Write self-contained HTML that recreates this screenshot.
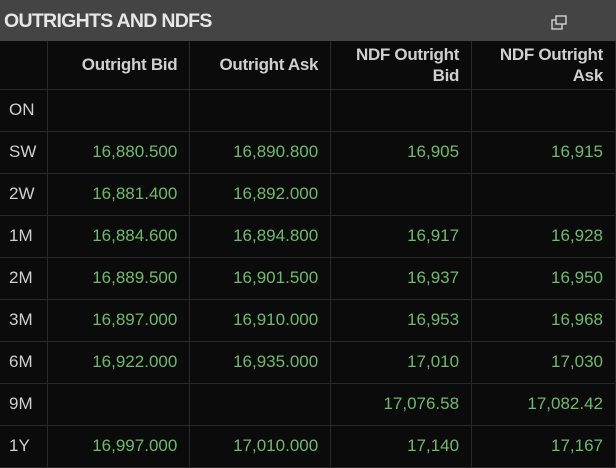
<!DOCTYPE html>
<html><head><style>
body{margin:0;width:616px;height:462px;background:#0b0b0b;overflow:hidden;font-family:"Liberation Sans",sans-serif;}
.top{position:absolute;left:0;top:0;width:616px;height:41px;background:#444;}
.top .t{position:absolute;left:4px;top:10px;color:#e6e6e6;font-weight:bold;font-size:19.5px;letter-spacing:-0.7px;}
.top svg{position:absolute;left:551px;top:15px;}
table{position:absolute;top:41px;left:0;border-collapse:collapse;table-layout:fixed;}
td{border:1px solid #2a2a2a;height:42px;box-sizing:border-box;padding:0 12px 0 0;text-align:right;font-size:17px;color:#6dbb6a;white-space:nowrap;}
tr.h td{height:48px;color:#cfcfcf;font-weight:bold;font-size:17px;line-height:21px;letter-spacing:-0.3px;}
td.l{text-align:left;padding:0 0 0 9px;color:#cfcfcf;}
tr td:first-child{border-left:none;}
tr.h td{border-top:none;}
</style></head><body>
<div class="top"><div class="t">OUTRIGHTS AND NDFS</div>
<svg width="17" height="15" viewBox="0 0 17 15" fill="none" stroke="#ddd" stroke-width="1.3"><rect x="5" y="1" width="10" height="8"/><path d="M5 5H1v9h10v-5"/></svg></div>
<table>
<colgroup><col style="width:48px"><col style="width:142px"><col style="width:141px"><col style="width:141px"><col style="width:144px"></colgroup>
<tr class="h"><td></td><td>Outright Bid</td><td>Outright Ask</td><td>NDF Outright<br>Bid</td><td>NDF Outright<br>Ask</td></tr>
<tr><td class="l">ON</td><td></td><td></td><td></td><td></td></tr>
<tr><td class="l">SW</td><td>16,880.500</td><td>16,890.800</td><td>16,905</td><td>16,915</td></tr>
<tr><td class="l">2W</td><td>16,881.400</td><td>16,892.000</td><td></td><td></td></tr>
<tr><td class="l">1M</td><td>16,884.600</td><td>16,894.800</td><td>16,917</td><td>16,928</td></tr>
<tr><td class="l">2M</td><td>16,889.500</td><td>16,901.500</td><td>16,937</td><td>16,950</td></tr>
<tr><td class="l">3M</td><td>16,897.000</td><td>16,910.000</td><td>16,953</td><td>16,968</td></tr>
<tr><td class="l">6M</td><td>16,922.000</td><td>16,935.000</td><td>17,010</td><td>17,030</td></tr>
<tr><td class="l">9M</td><td></td><td></td><td>17,076.58</td><td>17,082.42</td></tr>
<tr><td class="l">1Y</td><td>16,997.000</td><td>17,010.000</td><td>17,140</td><td>17,167</td></tr>
</table>
</body></html>
